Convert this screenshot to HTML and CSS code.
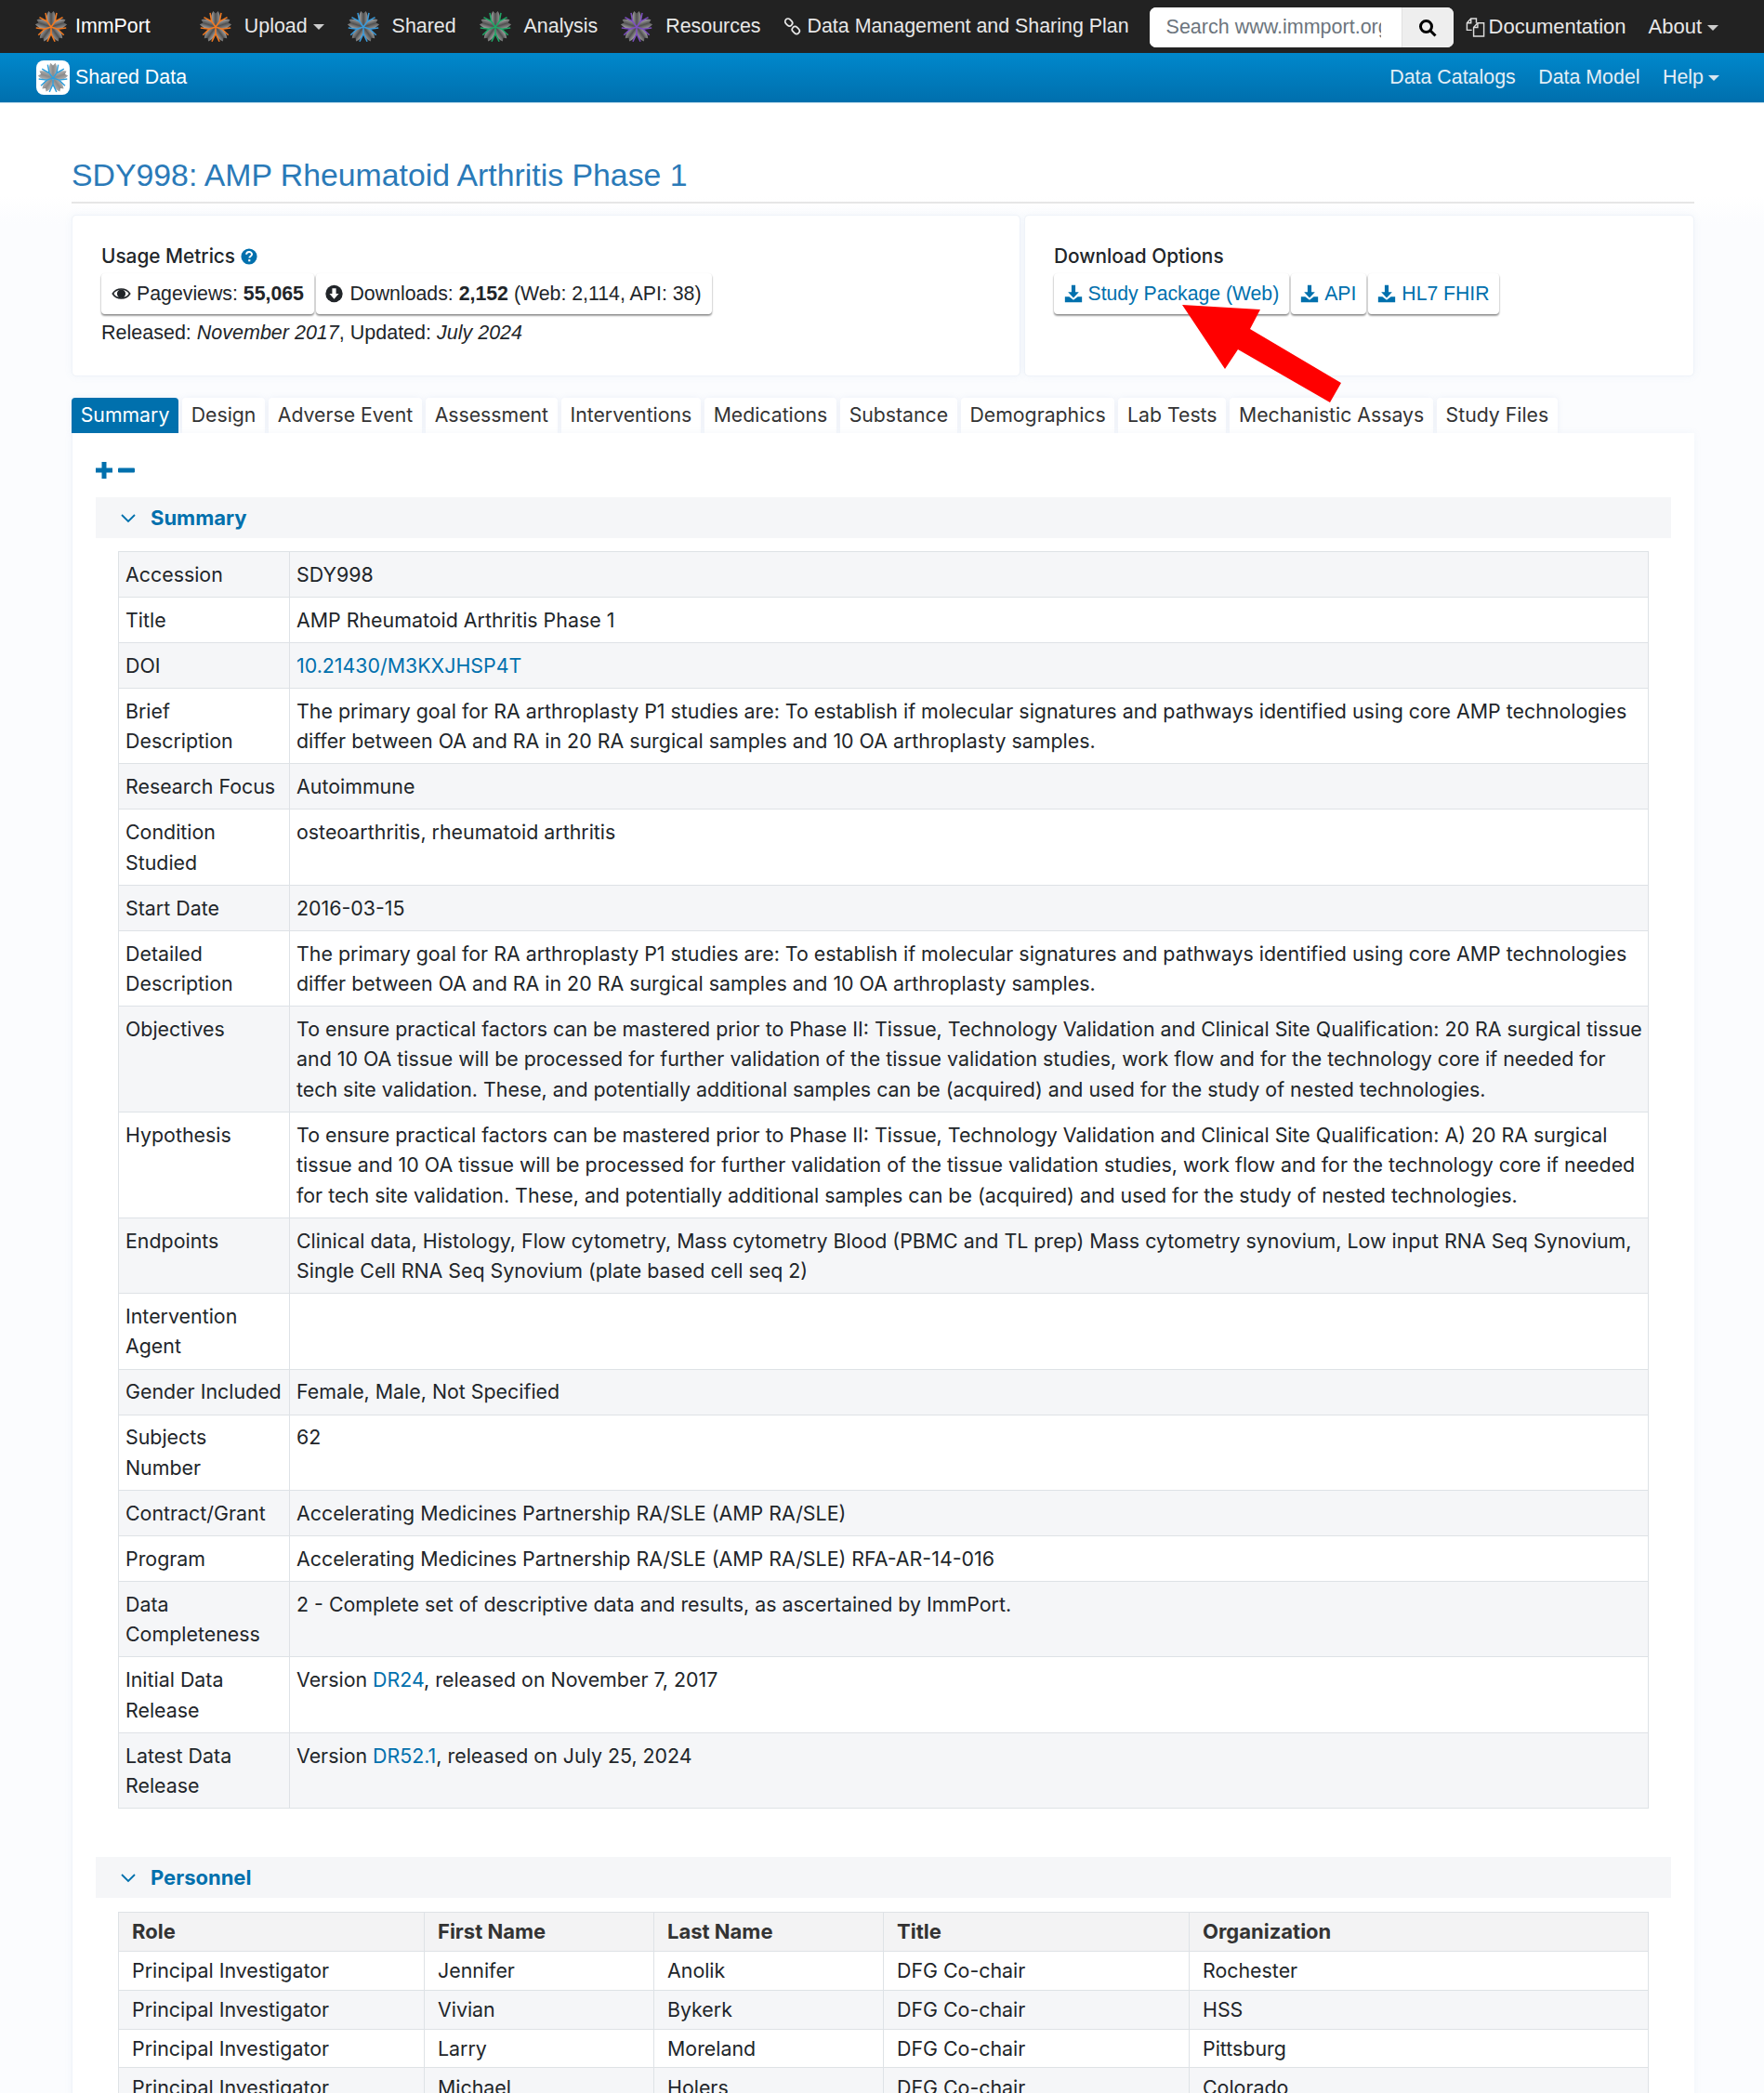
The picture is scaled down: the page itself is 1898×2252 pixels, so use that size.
FILE: index.html
```html
<!DOCTYPE html>
<html lang="en">
<head>
    <meta charset="UTF-8">
    <meta name="viewport" content="width=device-width, initial-scale=1.0">
    <title>SDY998: AMP Rheumatoid Arthritis Phase 1</title>
    <link rel="stylesheet" href="styles.css">
</head>
<body>
    <svg class="icon-defs" width="0" height="0">
        <defs>
            <linearGradient id="petal-fill" x1="0" y1="0" x2="1" y2="0">
                <stop offset="0" stop-color="#a8a8a8"/>
                <stop offset="0.5" stop-color="#505050"/>
                <stop offset="1" stop-color="#989898"/>
            </linearGradient>
            <linearGradient id="petal-light" x1="0" y1="0" x2="1" y2="0">
                <stop offset="0" stop-color="#b5b5b5"/>
                <stop offset="0.5" stop-color="#8a8a8a"/>
                <stop offset="1" stop-color="#b0b0b0"/>
            </linearGradient>
            <path id="arm" d="M0 0 V-8 L-4.500 -17.500 M0 -8 L4.500 -17.500" transform="rotate(36)" fill="none" stroke="currentColor" stroke-width="1.700"/>
            <g id="arms">
                <use href="#arm"/>
                <use href="#arm" transform="rotate(72)"/>
                <use href="#arm" transform="rotate(144)"/>
                <use href="#arm" transform="rotate(216)"/>
                <use href="#arm" transform="rotate(288)"/>
            </g>
            <path id="petal" d="M0 -1 C-6 -5 -7 -12 -3 -19 L0 -16 L3 -19 C7 -12 6 -5 0 -1Z"/>
            <g id="petals">
                <use href="#petal"/>
                <use href="#petal" transform="rotate(72)"/>
                <use href="#petal" transform="rotate(144)"/>
                <use href="#petal" transform="rotate(216)"/>
                <use href="#petal" transform="rotate(288)"/>
            </g>
            <symbol id="star" viewBox="-20 -20 40 40">
                <use href="#petals" fill="url(#petal-fill)"/>
                <use href="#arms"/>
            </symbol>
            <symbol id="star-pale" viewBox="-20 -20 40 40">
                <use href="#petals" fill="url(#petal-light)"/>
                <use href="#arms"/>
            </symbol>
            <symbol id="download" viewBox="0 0 24 24">
                <path d="M9.500 1h5v9h4.500l-7 7.500-7-7.500h4.500z" fill="currentColor"/>
                <path d="M1 16h5.500l5.500 4 5.500-4h5.500v7h-22z" fill="currentColor"/>
            </symbol>
            <symbol id="chevron" viewBox="0 0 16 16">
                <path d="M1 5l7 7 7-7" fill="none" stroke="currentColor" stroke-width="1.800"/>
            </symbol>
        </defs>
    </svg>

    <div class="page">
        <header class="topnav">
            <a class="brand">
                <svg class="star star-orange"><use href="#star"/></svg>
                <span>ImmPort</span>
            </a>
            <a class="nav-item caret">
                <svg class="star star-orange"><use href="#star"/></svg>
                <span>Upload</span>
            </a>
            <a class="nav-item">
                <svg class="star star-blue"><use href="#star"/></svg>
                <span>Shared</span>
            </a>
            <a class="nav-item">
                <svg class="star star-green"><use href="#star"/></svg>
                <span>Analysis</span>
            </a>
            <a class="nav-item">
                <svg class="star star-purple"><use href="#star"/></svg>
                <span>Resources</span>
            </a>
            <a class="nav-item nav-tight">
                <svg class="nav-icon" viewBox="0 0 20 20" fill="none" stroke="currentColor" stroke-width="1.800">
                    <rect x="1.500" y="2" width="9" height="6.500" rx="3.200" transform="rotate(45 6 5.200)"/>
                    <rect x="9.500" y="11" width="9" height="6.500" rx="3.200" transform="rotate(45 14 14.200)"/>
                </svg>
                <span>Data Management and Sharing Plan</span>
            </a>
            <form class="search">
                <input class="search-input" type="text" placeholder="Search www.immport.org">
                <span class="search-btn">
                    <svg width="20" height="20" viewBox="0 0 20 20" fill="none" stroke="#000" stroke-width="3">
                        <circle cx="8.500" cy="8.500" r="6"/>
                        <path d="M13 13l5.500 5.500"/>
                    </svg>
                </span>
            </form>
            <a class="nav-item nav-tight nav-doc nav-low">
                <svg class="doc-icon" viewBox="0 0 24 24" fill="none" stroke="currentColor" stroke-width="1.500">
                    <path d="M8 15H2.500V7L7 2h6v5"/>
                    <path d="M2.500 7H7V2"/>
                    <path d="M10 22V12l4.500-5h7v15z"/>
                    <path d="M10 12h4.500V7"/>
                </svg>
                <span>Documentation</span>
            </a>
            <a class="nav-item caret nav-low">About</a>
        </header>

        <div class="subnav">
            <a class="sub-brand">
                <span class="sub-logo"><svg class="star star-sky"><use href="#star-pale"/></svg></span>
                <span>Shared Data</span>
            </a>
            <nav class="sub-links">
                <a>Data Catalogs</a>
                <a>Data Model</a>
                <a class="caret">Help</a>
            </nav>
        </div>

        <main class="content">
            <h1 class="study-title">SDY998: AMP Rheumatoid Arthritis Phase 1</h1>

            <div class="cards">
                <section class="card card-metrics">
                    <h2 class="card-title">Usage Metrics
                        <svg class="help-icon" viewBox="0 0 20 20">
                            <circle cx="10" cy="10" r="9.500" fill="#0070ad"/>
                            <path d="M6.800 7.600c0-4 6.600-4 6.600-.300 0 2.400-3 2.500-3 4.500" fill="none" stroke="#fff" stroke-width="2.200"/>
                            <rect x="9.100" y="13.500" width="2.400" height="2.400" fill="#fff"/>
                        </svg>
                    </h2>
                    <div class="badges">
                        <span class="badge badge-stat">
                            <svg class="badge-icon" viewBox="0 0 24 24">
                                <path d="M1 12c5-8 17-8 22 0-5 8-17 8-22 0z" fill="none" stroke="#212529" stroke-width="2"/>
                                <circle cx="12" cy="12" r="5.500" fill="#212529"/>
                            </svg>
                            <span>Pageviews: <b>55,065</b></span>
                        </span>
                        <span class="badge badge-stat">
                            <svg class="badge-icon" viewBox="0 0 24 24">
                                <circle cx="12" cy="12" r="11" fill="#212529"/>
                                <path d="M9.500 5h5v7h3.500l-6 7-6-7h3.500z" fill="#fff"/>
                            </svg>
                            <span>Downloads: <b>2,152</b> (Web: 2,114, API: 38)</span>
                        </span>
                    </div>
                    <p class="released">Released: <i>November 2017</i>, Updated: <i>July 2024</i></p>
                </section>
                <section class="card card-download">
                    <h2 class="card-title">Download Options</h2>
                    <div class="badges">
                        <a class="badge badge-link"><svg class="badge-icon"><use href="#download"/></svg><span>Study Package (Web)</span></a>
                        <a class="badge badge-link"><svg class="badge-icon"><use href="#download"/></svg><span>API</span></a>
                        <a class="badge badge-link"><svg class="badge-icon"><use href="#download"/></svg><span>HL7 FHIR</span></a>
                    </div>
                </section>
            </div>

            <ul class="tabs">
                <li class="tab active">Summary</li>
                <li class="tab">Design</li>
                <li class="tab">Adverse Event</li>
                <li class="tab">Assessment</li>
                <li class="tab">Interventions</li>
                <li class="tab">Medications</li>
                <li class="tab">Substance</li>
                <li class="tab">Demographics</li>
                <li class="tab">Lab Tests</li>
                <li class="tab">Mechanistic Assays</li>
                <li class="tab">Study Files</li>
            </ul>

            <div class="panel">
                <div class="expand-tools">
                    <svg width="18" height="18" viewBox="0 0 18 18"><path d="M6.500 0h5v6.500H18v5h-6.500V18h-5v-6.500H0v-5h6.500z" fill="#0070ad"/></svg>
                    <svg width="18" height="18" viewBox="0 0 18 18"><rect x="0" y="6.500" width="18" height="5" rx="1" fill="#0070ad"/></svg>
                </div>

                <div class="section-head">
                    <svg class="chevron"><use href="#chevron"/></svg>
                    <span>Summary</span>
                </div>
                <table class="summary-table">
                    <tr><td>Accession</td><td>SDY998</td></tr>
                    <tr><td>Title</td><td>AMP Rheumatoid Arthritis Phase 1</td></tr>
                    <tr><td>DOI</td><td><a class="link">10.21430/M3KXJHSP4T</a></td></tr>
                    <tr><td>Brief<br>Description</td><td>The primary goal for RA arthroplasty P1 studies are: To establish if molecular signatures and pathways identified using core AMP technologies differ between OA and RA in 20 RA surgical samples and 10 OA arthroplasty samples.</td></tr>
                    <tr><td>Research Focus</td><td>Autoimmune</td></tr>
                    <tr><td>Condition Studied</td><td>osteoarthritis, rheumatoid arthritis</td></tr>
                    <tr><td>Start Date</td><td>2016-03-15</td></tr>
                    <tr><td>Detailed Description</td><td>The primary goal for RA arthroplasty P1 studies are: To establish if molecular signatures and pathways identified using core AMP technologies differ between OA and RA in 20 RA surgical samples and 10 OA arthroplasty samples.</td></tr>
                    <tr><td>Objectives</td><td>To ensure practical factors can be mastered prior to Phase II: Tissue, Technology Validation and Clinical Site Qualification: 20 RA surgical tissue and 10 OA tissue will be processed for further validation of the tissue validation studies, work flow and for the technology core if needed for tech site validation. These, and potentially additional samples can be (acquired) and used for the study of nested technologies.</td></tr>
                    <tr><td>Hypothesis</td><td>To ensure practical factors can be mastered prior to Phase II: Tissue, Technology Validation and Clinical Site Qualification: A) 20 RA surgical tissue and 10 OA tissue will be processed for further validation of the tissue validation studies, work flow and for the technology core if needed for tech site validation. These, and potentially additional samples can be (acquired) and used for the study of nested technologies.</td></tr>
                    <tr><td>Endpoints</td><td>Clinical data, Histology, Flow cytometry, Mass cytometry Blood (PBMC and TL prep) Mass cytometry synovium, Low input RNA Seq Synovium, Single Cell RNA Seq Synovium (plate based cell seq 2)</td></tr>
                    <tr><td>Intervention Agent</td><td></td></tr>
                    <tr><td>Gender Included</td><td>Female, Male, Not Specified</td></tr>
                    <tr><td>Subjects Number</td><td>62</td></tr>
                    <tr><td>Contract/Grant</td><td>Accelerating Medicines Partnership RA/SLE (AMP RA/SLE)</td></tr>
                    <tr><td>Program</td><td>Accelerating Medicines Partnership RA/SLE (AMP RA/SLE) RFA-AR-14-016</td></tr>
                    <tr><td>Data Completeness</td><td>2 - Complete set of descriptive data and results, as ascertained by ImmPort.</td></tr>
                    <tr><td>Initial Data Release</td><td>Version <a class="link">DR24</a>, released on November 7, 2017</td></tr>
                    <tr><td>Latest Data Release</td><td>Version <a class="link">DR52.1</a>, released on July 25, 2024</td></tr>
                </table>

                <div class="section-head section-personnel">
                    <svg class="chevron"><use href="#chevron"/></svg>
                    <span>Personnel</span>
                </div>
                <table class="people-table">
                    <thead>
                        <tr><th>Role</th><th>First Name</th><th>Last Name</th><th>Title</th><th>Organization</th></tr>
                    </thead>
                    <tbody>
                        <tr><td>Principal Investigator</td><td>Jennifer</td><td>Anolik</td><td>DFG Co-chair</td><td>Rochester</td></tr>
                        <tr><td>Principal Investigator</td><td>Vivian</td><td>Bykerk</td><td>DFG Co-chair</td><td>HSS</td></tr>
                        <tr><td>Principal Investigator</td><td>Larry</td><td>Moreland</td><td>DFG Co-chair</td><td>Pittsburg</td></tr>
                        <tr><td>Principal Investigator</td><td>Michael</td><td>Holers</td><td>DFG Co-chair</td><td>Colorado</td></tr>
                    </tbody>
                </table>
            </div>
        </main>

        <svg class="red-arrow" width="175" height="110" viewBox="0 0 175 110">
            <path d="M1 2 L85 7 L74 28 L172 86 L160 107 L61 50 L47 71 Z" fill="#ff0000"/>
        </svg>
    </div>
</body>
</html>
```

FILE: styles.css
```css
* {
    box-sizing: border-box;
}
html, body {
    margin: 0;
    padding: 0;
    background: #fff;
}
body {
    font-family: 'Inter', sans-serif;
    font-size: 21.38px;
    line-height: 32.4px;
    color: #212529;
}
.icon-defs {
    position: absolute;
}
.page {
    position: relative;
    width: 1898px;
    height: 2252px;
    overflow: hidden;
}

/* top bars */
.topnav {
    display: flex;
    align-items: center;
    gap: 24px;
    height: 57px;
    padding-left: 37px;
    background: #222;
    color: #e6e6e6;
    font-family: 'Liberation Sans', sans-serif;
    font-size: 21.4px;
}
.brand, .nav-item {
    display: flex;
    align-items: center;
    gap: 13px;
    color: #e8e8e8;
}
.brand {
    gap: 8px;
    color: #fff;
    margin-right: 28px;
}
.nav-tight {
    gap: 7px;
}
.nav-low {
    padding-top: 2px;
    font-size: 22px;
}
.star {
    width: 36px;
    height: 36px;
    flex: none;
}
.star-orange { color: #f47a20; }
.star-blue { color: #3a9bdc; }
.star-green { color: #1fa866; }
.star-purple { color: #7d4fc0; }
.star-sky { color: #2f9fdc; }
.nav-icon {
    width: 19px;
    height: 19px;
}
.doc-icon {
    width: 23px;
    height: 23px;
    color: #ddd;
}
.nav-doc {
    margin-left: -12px;
    gap: 3px;
}
.caret::after {
    content: "";
    display: inline-block;
    border-top: 6px solid #ccc;
    border-left: 6px solid transparent;
    border-right: 6px solid transparent;
}
.search {
    display: flex;
    width: 327px;
    height: 43px;
    margin: 2px 0 0 -2px;
    background: #fff;
    border-radius: 7px;
    overflow: hidden;
}
.search-input {
    width: 271px;
    border: none;
    padding: 0 22px 0 18px;
    font-family: 'Liberation Sans', sans-serif;
    font-size: 21.5px;
    outline: none;
}
.search-input::placeholder {
    color: #6c757d;
}
.search-btn {
    display: flex;
    align-items: center;
    justify-content: center;
    flex: 1;
    background: #eee;
    border-left: 1px solid #e0e0e0;
}
.subnav {
    display: flex;
    align-items: center;
    justify-content: space-between;
    height: 54px;
    padding: 0 48px 0 39px;
    background: linear-gradient(#0088cc, #006fad);
    border-bottom: 1px solid #b8d8ea;
    font-family: 'Liberation Sans', sans-serif;
    color: #fff;
}
.sub-brand {
    display: flex;
    align-items: center;
    gap: 6px;
}
.sub-logo {
    display: flex;
    align-items: center;
    justify-content: center;
    width: 36px;
    height: 37px;
    background: #fff;
    border-radius: 8px;
}
.sub-logo .star {
    width: 34px;
    height: 34px;
}
.sub-links {
    display: flex;
    gap: 24.5px;
    color: #e4eef6;
}
.sub-links .caret {
    display: flex;
    align-items: center;
    gap: 5px;
}
.sub-links .caret::after {
    border-top-color: #d8e6f0;
}
.topnav .caret {
    gap: 6px;
}
.topnav .caret .star {
    margin-right: 7px;
}

/* page body */
.content {
    padding: 0 75px 0 77px;
    background: linear-gradient(#fff 100px, #fbfcfe 130px);
}
.study-title {
    margin: 0;
    padding: 58px 0 12px;
    height: 108px;
    border-bottom: 2px solid #e6e6e6;
    font-family: 'Liberation Sans', sans-serif;
    font-size: 33.8px;
    font-weight: 400;
    line-height: 38px;
    color: #2a7ab8;
}
.cards {
    display: flex;
    gap: 4px;
    margin-top: 12px;
    font-family: 'Liberation Sans', sans-serif;
    font-size: 21.2px;
}
.card {
    height: 174px;
    padding: 28px 31px 0;
    background: #fff;
    border: 1px solid #eff3f9;
    border-radius: 5px;
    box-shadow: 0 0 8px rgba(120, 150, 200, 0.08);
}
.card-metrics {
    width: 1021px;
}
.card-download {
    flex: 1;
}
.card-title {
    display: flex;
    align-items: center;
    gap: 6px;
    margin: 0;
    font-family: 'Inter', sans-serif;
    font-size: 20.8px;
    font-weight: 500;
    line-height: 32px;
    color: #212529;
}
.help-icon {
    width: 18px;
    height: 18px;
}
.badges {
    display: flex;
    gap: 2px;
    margin-top: 2px;
}
.badge {
    display: flex;
    align-items: center;
    gap: 6px;
    height: 44px;
    padding: 0 11px;
    background: #fff;
    border-radius: 4px;
    box-shadow: 0 1px 2px rgba(0, 0, 0, 0.25), 0 2px 2px rgba(0, 0, 0, 0.3);
    white-space: nowrap;
}
.badge b {
    font-weight: 700;
}
.badge-stat {
    padding: 0 11.5px 0 11px;
    font-size: 21.3px;
}
.badge-stat .badge-icon {
    width: 21px;
}
.badge-stat + .badge-stat {
    padding-left: 9px;
}
.badge-icon {
    width: 20px;
    height: 20px;
    flex: none;
}
.badge-link {
    padding: 0 10.5px;
    color: #0070ad;
}
.released {
    margin: 4px 0 0;
    font-size: 21.5px;
}

/* tabs */
.tabs {
    display: flex;
    gap: 4px;
    margin: 23px 0 0;
    padding: 0;
    list-style: none;
    font-size: 21.25px;
}
.tab {
    height: 38px;
    padding: 0 9.7px;
    line-height: 37px;
    background: #fff;
    border-radius: 4px 4px 0 0;
    box-shadow: 0 0 6px rgba(120, 150, 200, 0.12);
    color: #333;
}
.tab.active {
    background: #0070ad;
    color: #fff;
}
.panel {
    position: relative;
    padding: 0 25px;
    height: 1800px;
    background: #fff;
    border-left: 1px solid #eff3f9;
    box-shadow: 0 0 8px rgba(120, 150, 200, 0.08);
}
.expand-tools {
    display: flex;
    gap: 6px;
    height: 69px;
    padding-top: 31px;
}
.section-head {
    display: flex;
    align-items: center;
    gap: 16px;
    height: 44px;
    padding-left: 27px;
    background: #f5f6f8;
    color: #0070ad;
    font-size: 22px;
    font-weight: 700;
}
.chevron {
    width: 16px;
    height: 16px;
}
.summary-table {
    width: 1647px;
    margin: 14px 0 0 24px;
    border-collapse: collapse;
}
.summary-table td {
    padding: 7.8px 3px 7.8px 7px;
    border: 1px solid #dee2e6;
    vertical-align: top;
}
.summary-table td:first-child {
    width: 184px;
}
.summary-table tr:nth-child(odd) {
    background: #f5f6f8;
}
.link {
    color: #0070ad;
}
.section-personnel {
    margin-top: 52px;
}
.people-table {
    width: 1647px;
    margin: 15px 0 0 24px;
    border-collapse: collapse;
    table-layout: fixed;
}
.people-table th, .people-table td {
    height: 41.8px;
    padding: 0 14px;
    border: 1px solid #dee2e6;
    text-align: left;
}
.people-table th {
    background: #f3f3f4;
    font-size: 22px;
    font-weight: 700;
    color: #333;
}
.people-table th:nth-child(1) { width: 329px; }
.people-table th:nth-child(2) { width: 247px; }
.people-table th:nth-child(3) { width: 247px; }
.people-table th:nth-child(4) { width: 329px; }
.people-table tbody tr:nth-child(even) {
    background: #f5f6f8;
}

/* annotation drawn over the screenshot */
.red-arrow {
    position: absolute;
    left: 1271px;
    top: 326px;
}
```
